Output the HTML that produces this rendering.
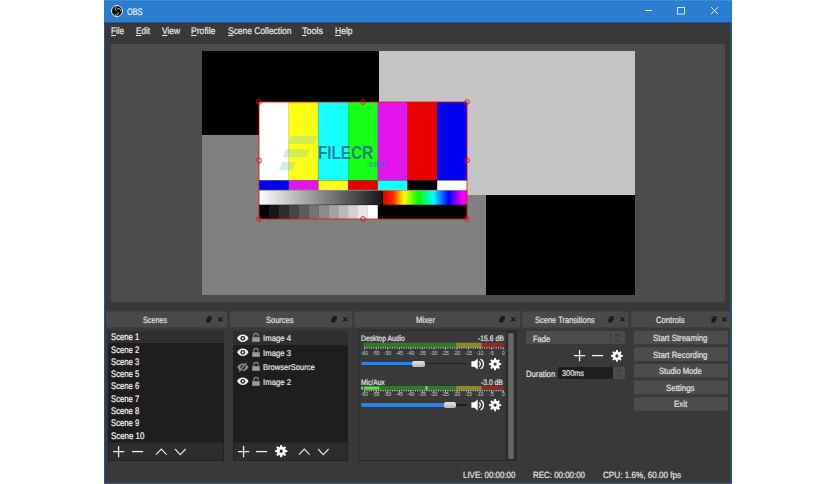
<!DOCTYPE html>
<html><head><meta charset="utf-8"><title>OBS</title>
<style>
html,body{margin:0;padding:0;background:#fff;}
body{width:836px;height:484px;position:relative;overflow:hidden;font-family:"Liberation Sans",sans-serif;}
.a{position:absolute;}
.t{text-rendering:geometricPrecision;-webkit-text-stroke:0.22px currentColor;position:absolute;white-space:pre;line-height:14px;height:14px;transform-origin:0 50%;font-family:"Liberation Sans",sans-serif;}
.t u{text-decoration:underline;text-underline-offset:1px;}
svg{position:absolute;overflow:visible;}

</style></head>
<body>
<div class="a" id="win" style="left:104px;top:0;width:628px;height:484px;background:#3a3939;"></div>
<div class="a" id="titlebar" style="left:104px;top:0;width:628px;height:24px;background:linear-gradient(#4a97df 0,#2b7dd2 1.4px,#2b7dd2 22.3px,#2e3033 22.7px,#333334 23.4px,rgba(58,57,57,0) 23.8px);"></div>
<div class="a" style="left:104px;top:22px;width:1.3px;height:462px;background:#27568a;"></div>
<div class="a" style="left:730.4px;top:22px;width:1.6px;height:462px;background:#24507f;"></div>
<div class="a" style="left:104px;top:482.5px;width:628px;height:1.5px;background:#2566a8;"></div>

<!-- OBS icon -->
<svg style="left:111.05px;top:4.7px" width="12" height="12" viewBox="0 0 24 24">
  <circle cx="12" cy="12" r="11" fill="#0b0b0b" stroke="#e8eef6" stroke-width="2"/>
  <path d="M11 3.5c-3 1.5-3.6 5.5-1 7.6 M20 11c-.6-3.4-4.3-5-7-3.2 M8.5 20c3.2 1.2 6.3-1.3 6-4.5" fill="none" stroke="#e8e8e8" stroke-width="1.7" stroke-linecap="round"/>
</svg>
<!-- window buttons -->
<div class="a" style="left:645px;top:10.4px;width:7px;height:1px;background:#f4f8ff;"></div>
<svg style="left:677px;top:7px" width="8" height="8" viewBox="0 0 8 8"><rect x="0.5" y="0.5" width="7" height="6.6" fill="none" stroke="#e8f2ff" stroke-width="0.9"/></svg>
<svg style="left:710.9px;top:7.2px" width="7.2" height="7.2" viewBox="0 0 7.2 7.2"><path d="M0.2 0.2L7 7M7 0.2L0.2 7" stroke="#fff" stroke-width="1" fill="none"/></svg>

<!-- preview -->
<div class="a" style="left:111px;top:44px;width:614px;height:258px;background:#4c4c4c;border-radius:2px;"></div>
<div class="a" style="left:202px;top:51px;width:177px;height:84px;background:#000;"></div>
<div class="a" style="left:202px;top:135px;width:284px;height:160px;background:#808080;"></div>
<div class="a" style="left:379px;top:51px;width:256px;height:144px;background:#c4c4c4;"></div>
<div class="a" style="left:486px;top:195px;width:149px;height:100px;background:#000;"></div>

<!-- color bars -->
<svg style="left:259px;top:102px" width="208" height="117" viewBox="0 0 208 117">
  <defs>
    <linearGradient id="gw" x1="0" x2="1" y1="0" y2="0"><stop offset="0" stop-color="#fff"/><stop offset="1" stop-color="#181818"/></linearGradient>
    <linearGradient id="rb" x1="0" x2="1" y1="0" y2="0">
      <stop offset="0" stop-color="#e00000"/><stop offset="0.12" stop-color="#ff2a00"/><stop offset="0.25" stop-color="#ffff00"/><stop offset="0.42" stop-color="#00ff00"/>
      <stop offset="0.6" stop-color="#00ffff"/><stop offset="0.78" stop-color="#0000ff"/><stop offset="0.95" stop-color="#ff00ff"/><stop offset="1" stop-color="#e000e0"/>
    </linearGradient>
  </defs>
  <rect x="0" y="0" width="208" height="117" fill="#000"/>
  <rect x="0" y="0" width="29.8" height="78.5" fill="#ffffff"/>
  <rect x="29.7" y="0" width="29.8" height="78.5" fill="#ffff16"/>
  <rect x="59.4" y="0" width="29.8" height="78.5" fill="#16ffff"/>
  <rect x="89.1" y="0" width="29.8" height="78.5" fill="#16ff16"/>
  <rect x="118.8" y="0" width="29.8" height="78.5" fill="#e414ee"/>
  <rect x="148.5" y="0" width="29.8" height="78.5" fill="#e80000"/>
  <rect x="178.2" y="0" width="29.8" height="78.5" fill="#0000f0"/>
  <rect x="0" y="78.5" width="29.8" height="9.5" fill="#0000f0"/>
  <rect x="29.7" y="78.5" width="29.8" height="9.5" fill="#e414ee"/>
  <rect x="59.4" y="78.5" width="29.8" height="9.5" fill="#ffff16"/>
  <rect x="89.1" y="78.5" width="29.8" height="9.5" fill="#e80000"/>
  <rect x="118.8" y="78.5" width="29.8" height="9.5" fill="#16ffff"/>
  <rect x="148.5" y="78.5" width="29.8" height="9.5" fill="#000"/>
  <rect x="178.2" y="78.5" width="29.8" height="9.5" fill="#fff"/>
  <rect x="0" y="87.9" width="208" height="0.8" fill="#cfcfcf"/>
  <rect x="0" y="88.7" width="123" height="14" fill="url(#gw)"/>
  <rect x="124" y="88.7" width="84" height="14" fill="url(#rb)"/>
  <g id="steps"></g>
  <rect x="0.00" y="103.1" width="9.99" height="13.9" fill="rgb(0,0,0)"/>
  <rect x="9.89" y="103.1" width="9.99" height="13.9" fill="rgb(23,23,23)"/>
  <rect x="19.78" y="103.1" width="9.99" height="13.9" fill="rgb(46,46,46)"/>
  <rect x="29.68" y="103.1" width="9.99" height="13.9" fill="rgb(70,70,70)"/>
  <rect x="39.57" y="103.1" width="9.99" height="13.9" fill="rgb(93,93,93)"/>
  <rect x="49.46" y="103.1" width="9.99" height="13.9" fill="rgb(116,116,116)"/>
  <rect x="59.35" y="103.1" width="9.99" height="13.9" fill="rgb(139,139,139)"/>
  <rect x="69.24" y="103.1" width="9.99" height="13.9" fill="rgb(162,162,162)"/>
  <rect x="79.13" y="103.1" width="9.99" height="13.9" fill="rgb(185,185,185)"/>
  <rect x="89.03" y="103.1" width="9.99" height="13.9" fill="rgb(209,209,209)"/>
  <rect x="98.92" y="103.1" width="9.99" height="13.9" fill="rgb(232,232,232)"/>
  <rect x="108.81" y="103.1" width="9.99" height="13.9" fill="rgb(255,255,255)"/>
  <!-- selection -->
  <rect x="0" y="0" width="208" height="117" fill="none" stroke="#e81010" stroke-width="0.85"/>
  <g fill="none" stroke="#d81818" stroke-width="0.9">
    <circle cx="0" cy="0" r="2.4"/><circle cx="104" cy="0" r="2.4"/><circle cx="208" cy="0" r="2.4"/>
    <circle cx="0" cy="58.5" r="2.4"/><circle cx="208" cy="58.5" r="2.4"/>
    <circle cx="0" cy="117" r="2.4"/><circle cx="104" cy="117" r="2.4"/><circle cx="208" cy="117" r="2.4"/>
  </g>
</svg>

<!-- watermark logo -->
<svg style="left:280px;top:134px" width="40" height="40" viewBox="0 0 40 40">
  <g fill="#86cdb0" fill-opacity="0.36">
    <polygon points="11,2 38,2 35,10 8,10"/>
    <polygon points="6,15 30,15 27,23 3,23"/>
    <polygon points="2,28 16,28 13,36 -1,36"/>
  </g>
</svg>
<span class="a" style="left:318px;top:143px;font-size:18.5px;line-height:20px;font-weight:bold;color:rgba(28,110,140,0.85);letter-spacing:-0.2px;transform:scaleX(0.84);transform-origin:0 50%;white-space:pre;">FILECR</span>
<span class="a" style="left:366.5px;top:159px;font-size:8.5px;line-height:10px;font-weight:bold;color:rgba(40,130,160,0.7);white-space:pre;">.com</span>

<!-- dock titles -->
<svg style="left:0;top:0" width="836" height="484" viewBox="0 0 836 484"><rect x="106" y="311.5" width="121.3" height="16" fill="#494949"/><rect x="229.8" y="311.5" width="122.6" height="16" fill="#494949"/><rect x="354.4" y="311.5" width="165.7" height="16" fill="#494949"/><rect x="522.1" y="311.5" width="106.4" height="16" fill="#494949"/><rect x="630.8" y="311.5" width="99.6" height="16" fill="#494949"/></svg>

<!-- scenes list -->
<div class="a" style="left:108.3px;top:330.7px;width:115.3px;height:111.5px;background:#1f1e1f;"></div>
<div class="a" style="left:108.3px;top:330.7px;width:115.3px;height:12.1px;background:#2f2f2f;"></div>
<div class="a" style="left:108.3px;top:442px;width:115.3px;height:19.4px;background:#2d2d2d;box-shadow:inset 0 0 0 0.8px #222;"></div>
<!-- sources list -->
<div class="a" style="left:233px;top:330.7px;width:115.3px;height:111.5px;background:#1f1e1f;"></div>
<div class="a" style="left:233px;top:330.7px;width:115.3px;height:14.5px;background:#2f2f2f;"></div>
<div class="a" style="left:233px;top:442px;width:115.3px;height:19.4px;background:#2d2d2d;box-shadow:inset 0 0 0 0.8px #222;"></div>

<!-- mixer panel -->
<div class="a" style="left:357.6px;top:330.2px;width:159px;height:130.6px;background:#3a3939;border:1px solid #2a2a2a;box-sizing:border-box;"></div>
<div class="a" style="left:506.4px;top:331px;width:10px;height:129px;background:#2b2b2b;"></div>
<div class="a" style="left:508.2px;top:333px;width:5.9px;height:125.6px;background:linear-gradient(to right,#5a5a5a,#6a6a6a 50%,#585858);border-radius:1.5px;"></div>

<!-- dock icons -->
<svg style="left:205.6px;top:315.7px" width="6.2" height="7" viewBox="0 0 6.2 7"><rect x="1.7" y="0.3" width="4" height="4" fill="#161616"/><rect x="0.3" y="2.3" width="4" height="4.2" fill="#161616" stroke="#3a3a3a" stroke-width="0.4"/></svg><svg style="left:218.2px;top:317.3px" width="5" height="5" viewBox="0 0 5 5"><path d="M0.4 0.4L4.4 4.4M4.4 0.4L0.4 4.4" stroke="#111" stroke-width="1.1" fill="none"/></svg>
<svg style="left:330.6px;top:315.7px" width="6.2" height="7" viewBox="0 0 6.2 7"><rect x="1.7" y="0.3" width="4" height="4" fill="#161616"/><rect x="0.3" y="2.3" width="4" height="4.2" fill="#161616" stroke="#3a3a3a" stroke-width="0.4"/></svg><svg style="left:342.7px;top:317.3px" width="5" height="5" viewBox="0 0 5 5"><path d="M0.4 0.4L4.4 4.4M4.4 0.4L0.4 4.4" stroke="#111" stroke-width="1.1" fill="none"/></svg>
<svg style="left:498.8px;top:315.7px" width="6.2" height="7" viewBox="0 0 6.2 7"><rect x="1.7" y="0.3" width="4" height="4" fill="#161616"/><rect x="0.3" y="2.3" width="4" height="4.2" fill="#161616" stroke="#3a3a3a" stroke-width="0.4"/></svg><svg style="left:511.0px;top:317.3px" width="5" height="5" viewBox="0 0 5 5"><path d="M0.4 0.4L4.4 4.4M4.4 0.4L0.4 4.4" stroke="#111" stroke-width="1.1" fill="none"/></svg>
<svg style="left:607.6px;top:315.7px" width="6.2" height="7" viewBox="0 0 6.2 7"><rect x="1.7" y="0.3" width="4" height="4" fill="#161616"/><rect x="0.3" y="2.3" width="4" height="4.2" fill="#161616" stroke="#3a3a3a" stroke-width="0.4"/></svg><svg style="left:619.6px;top:317.3px" width="5" height="5" viewBox="0 0 5 5"><path d="M0.4 0.4L4.4 4.4M4.4 0.4L0.4 4.4" stroke="#111" stroke-width="1.1" fill="none"/></svg>
<svg style="left:710.6px;top:315.7px" width="6.2" height="7" viewBox="0 0 6.2 7"><rect x="1.7" y="0.3" width="4" height="4" fill="#161616"/><rect x="0.3" y="2.3" width="4" height="4.2" fill="#161616" stroke="#3a3a3a" stroke-width="0.4"/></svg><svg style="left:722.4px;top:317.3px" width="5" height="5" viewBox="0 0 5 5"><path d="M0.4 0.4L4.4 4.4M4.4 0.4L0.4 4.4" stroke="#111" stroke-width="1.1" fill="none"/></svg>
<!-- scene toolbar -->
<svg style="left:113.1px;top:445.7px" width="11.2" height="11.2" viewBox="-5.6 -5.6 11.2 11.2"><path d="M-5.6 0H5.6M0 -5.6V5.6" stroke="#f0f0f0" stroke-width="1.3" fill="none"/></svg>
<svg style="left:132.0px;top:445.7px" width="11.2" height="11.2" viewBox="-5.6 -5.6 11.2 11.2"><path d="M-5.6 0H5.6" stroke="#f0f0f0" stroke-width="1.3" fill="none"/></svg>
<svg style="left:155.7px;top:448.8px" width="10.6" height="5.6" viewBox="-5.3 -2.8 10.6 5.6"><path d="M-5.3 2.8L0 -2.8L5.3 2.8" stroke="#e8e8e8" stroke-width="1.1" fill="none"/></svg>
<svg style="left:174.7px;top:449.0px" width="10.6" height="5.6" viewBox="-5.3 -2.8 10.6 5.6"><path d="M-5.3 -2.8L0 2.8L5.3 -2.8" stroke="#e8e8e8" stroke-width="1.1" fill="none"/></svg>
<!-- sources toolbar -->
<svg style="left:237.7px;top:445.7px" width="11.2" height="11.2" viewBox="-5.6 -5.6 11.2 11.2"><path d="M-5.6 0H5.6M0 -5.6V5.6" stroke="#f0f0f0" stroke-width="1.3" fill="none"/></svg>
<svg style="left:256.4px;top:445.7px" width="11.2" height="11.2" viewBox="-5.6 -5.6 11.2 11.2"><path d="M-5.6 0H5.6" stroke="#f0f0f0" stroke-width="1.3" fill="none"/></svg>
<svg style="left:275.1px;top:445.1px" width="12.4" height="12.4" viewBox="-6.2 -6.2 12.4 12.4"><path d="M4.31 -1.18L6.14 -0.83L6.14 0.83L4.31 1.18L3.88 2.21L4.93 3.76L3.76 4.93L2.21 3.88L1.18 4.31L0.83 6.14L-0.83 6.14L-1.18 4.31L-2.21 3.88L-3.76 4.93L-4.93 3.76L-3.88 2.21L-4.31 1.18L-6.14 0.83L-6.14 -0.83L-4.31 -1.18L-3.88 -2.21L-4.93 -3.76L-3.76 -4.93L-2.21 -3.88L-1.18 -4.31L-0.83 -6.14L0.83 -6.14L1.18 -4.31L2.21 -3.88L3.76 -4.93L4.93 -3.76L3.88 -2.21ZM1.61 0A1.61 1.61 0 1 0 -1.61 0A1.61 1.61 0 1 0 1.61 0Z" fill="#ffffff" fill-rule="evenodd"/></svg>
<svg style="left:299.2px;top:448.8px" width="10.6" height="5.6" viewBox="-5.3 -2.8 10.6 5.6"><path d="M-5.3 2.8L0 -2.8L5.3 2.8" stroke="#e8e8e8" stroke-width="1.1" fill="none"/></svg>
<svg style="left:317.7px;top:449.0px" width="10.6" height="5.6" viewBox="-5.3 -2.8 10.6 5.6"><path d="M-5.3 -2.8L0 2.8L5.3 -2.8" stroke="#e8e8e8" stroke-width="1.1" fill="none"/></svg>
<!-- source rows -->
<svg style="left:236.9px;top:333.8px" width="11.6" height="8.6" viewBox="-5.8 -4.3 11.6 8.6"><path d="M-5.7 0C-3.5 -4.9 3.5 -4.9 5.7 0C3.5 4.9 -3.5 4.9 -5.7 0Z" fill="#f2f2f2"/><circle cx="0" cy="0" r="2.4" fill="#1f1e1f"/><circle cx="0" cy="0" r="1.15" fill="#f2f2f2"/></svg>
<svg style="left:251.5px;top:333.2px" width="8" height="9" viewBox="-4 -4.6 8 9"><path d="M-2.2 -0.3V-2A2.2 2.2 0 0 1 2.2 -2V-1.2" fill="none" stroke="#8c8c8c" stroke-width="1.1"/><rect x="-3.8" y="-0.4" width="7.6" height="4.6" fill="#9a9a9a"/></svg>
<svg style="left:236.9px;top:348.4px" width="11.6" height="8.6" viewBox="-5.8 -4.3 11.6 8.6"><path d="M-5.7 0C-3.5 -4.9 3.5 -4.9 5.7 0C3.5 4.9 -3.5 4.9 -5.7 0Z" fill="#f2f2f2"/><circle cx="0" cy="0" r="2.4" fill="#1f1e1f"/><circle cx="0" cy="0" r="1.15" fill="#f2f2f2"/></svg>
<svg style="left:251.5px;top:347.8px" width="8" height="9" viewBox="-4 -4.6 8 9"><path d="M-2.2 -0.3V-2A2.2 2.2 0 0 1 2.2 -2V-1.2" fill="none" stroke="#8c8c8c" stroke-width="1.1"/><rect x="-3.8" y="-0.4" width="7.6" height="4.6" fill="#9a9a9a"/></svg>
<svg style="left:236.9px;top:362.9px" width="11.6" height="8.6" viewBox="-5.8 -4.3 11.6 8.6"><path d="M-5.7 0C-3.5 -4.9 3.5 -4.9 5.7 0C3.5 4.9 -3.5 4.9 -5.7 0Z" fill="#8a8a8a"/><circle cx="0" cy="0" r="2.4" fill="#1f1e1f"/><circle cx="0" cy="0" r="1.15" fill="#8a8a8a"/><path d="M-3.6 4.4L3.6 -4.4" stroke="#8a8a8a" stroke-width="1.2"/><path d="M-2.6 4.8L4.6 -4" stroke="#1f1e1f" stroke-width="0.8"/></svg>
<svg style="left:251.5px;top:362.3px" width="8" height="9" viewBox="-4 -4.6 8 9"><path d="M-2.2 -0.3V-2A2.2 2.2 0 0 1 2.2 -2V-1.2" fill="none" stroke="#8c8c8c" stroke-width="1.1"/><rect x="-3.8" y="-0.4" width="7.6" height="4.6" fill="#9a9a9a"/></svg>
<svg style="left:236.9px;top:377.4px" width="11.6" height="8.6" viewBox="-5.8 -4.3 11.6 8.6"><path d="M-5.7 0C-3.5 -4.9 3.5 -4.9 5.7 0C3.5 4.9 -3.5 4.9 -5.7 0Z" fill="#f2f2f2"/><circle cx="0" cy="0" r="2.4" fill="#1f1e1f"/><circle cx="0" cy="0" r="1.15" fill="#f2f2f2"/></svg>
<svg style="left:251.5px;top:376.8px" width="8" height="9" viewBox="-4 -4.6 8 9"><path d="M-2.2 -0.3V-2A2.2 2.2 0 0 1 2.2 -2V-1.2" fill="none" stroke="#8c8c8c" stroke-width="1.1"/><rect x="-3.8" y="-0.4" width="7.6" height="4.6" fill="#9a9a9a"/></svg>
<!-- mixer channels -->
<svg style="left:0;top:0" width="836" height="484" viewBox="0 0 836 484"><rect x="363.4" y="342.7" width="92.7" height="5.0" fill="#2e7a2a"/><rect x="456" y="342.7" width="25.9" height="5.0" fill="#8a8a2c"/><rect x="481.8" y="342.7" width="21.5" height="5.0" fill="#8a2c2c"/><path d="M364.70 347.30v2.3M367.01 347.30v1.3M369.32 347.30v1.3M371.62 347.30v1.3M373.93 347.30v1.3M376.24 347.30v2.3M378.55 347.30v1.3M380.86 347.30v1.3M383.17 347.30v1.3M385.47 347.30v1.3M387.78 347.30v2.3M390.09 347.30v1.3M392.40 347.30v1.3M394.71 347.30v1.3M397.02 347.30v1.3M399.32 347.30v2.3M401.63 347.30v1.3M403.94 347.30v1.3M406.25 347.30v1.3M408.56 347.30v1.3M410.87 347.30v2.3M413.18 347.30v1.3M415.48 347.30v1.3M417.79 347.30v1.3M420.10 347.30v1.3M422.41 347.30v2.3M424.72 347.30v1.3M427.02 347.30v1.3M429.33 347.30v1.3M431.64 347.30v1.3M433.95 347.30v2.3M436.26 347.30v1.3M438.57 347.30v1.3M440.88 347.30v1.3M443.18 347.30v1.3M445.49 347.30v2.3M447.80 347.30v1.3M450.11 347.30v1.3M452.42 347.30v1.3M454.73 347.30v1.3M457.03 347.30v2.3M459.34 347.30v1.3M461.65 347.30v1.3M463.96 347.30v1.3M466.27 347.30v1.3M468.57 347.30v2.3M470.88 347.30v1.3M473.19 347.30v1.3M475.50 347.30v1.3M477.81 347.30v1.3M480.12 347.30v2.3M482.42 347.30v1.3M484.73 347.30v1.3M487.04 347.30v1.3M489.35 347.30v1.3M491.66 347.30v2.3M493.97 347.30v1.3M496.27 347.30v1.3M498.58 347.30v1.3M500.89 347.30v1.3M503.20 347.30v2.3" stroke="#ececec" stroke-width="0.8" fill="none"/><text x="364.5" y="354.6" font-family="Liberation Sans, sans-serif" font-size="5" fill="#d0d0d0" text-anchor="middle">-60</text><text x="376.0" y="354.6" font-family="Liberation Sans, sans-serif" font-size="5" fill="#d0d0d0" text-anchor="middle">-55</text><text x="387.6" y="354.6" font-family="Liberation Sans, sans-serif" font-size="5" fill="#d0d0d0" text-anchor="middle">-50</text><text x="399.1" y="354.6" font-family="Liberation Sans, sans-serif" font-size="5" fill="#d0d0d0" text-anchor="middle">-45</text><text x="410.7" y="354.6" font-family="Liberation Sans, sans-serif" font-size="5" fill="#d0d0d0" text-anchor="middle">-40</text><text x="422.2" y="354.6" font-family="Liberation Sans, sans-serif" font-size="5" fill="#d0d0d0" text-anchor="middle">-35</text><text x="433.8" y="354.6" font-family="Liberation Sans, sans-serif" font-size="5" fill="#d0d0d0" text-anchor="middle">-30</text><text x="445.3" y="354.6" font-family="Liberation Sans, sans-serif" font-size="5" fill="#d0d0d0" text-anchor="middle">-25</text><text x="456.8" y="354.6" font-family="Liberation Sans, sans-serif" font-size="5" fill="#d0d0d0" text-anchor="middle">-20</text><text x="468.4" y="354.6" font-family="Liberation Sans, sans-serif" font-size="5" fill="#d0d0d0" text-anchor="middle">-15</text><text x="479.9" y="354.6" font-family="Liberation Sans, sans-serif" font-size="5" fill="#d0d0d0" text-anchor="middle">-10</text><text x="491.5" y="354.6" font-family="Liberation Sans, sans-serif" font-size="5" fill="#d0d0d0" text-anchor="middle">-5</text><text x="503.5" y="354.6" font-family="Liberation Sans, sans-serif" font-size="5" fill="#d0d0d0" text-anchor="middle">0</text></svg>
<svg style="left:0;top:0" width="836" height="484" viewBox="0 0 836 484"><rect x="363.4" y="386.0" width="92.7" height="4.4" fill="#2e7a2a"/><rect x="456" y="386.0" width="25.9" height="4.4" fill="#8a8a2c"/><rect x="481.8" y="386.0" width="21.5" height="4.4" fill="#8a2c2c"/><rect x="361.2" y="386.6" width="1.8" height="3.0" fill="#7fe870"/><rect x="364.1" y="386.6" width="15.2" height="3.0" fill="#58e04c"/><rect x="425.6" y="386.3" width="1.8" height="3.6" fill="#86e878"/><path d="M364.70 390.00v2.3M367.01 390.00v1.3M369.32 390.00v1.3M371.62 390.00v1.3M373.93 390.00v1.3M376.24 390.00v2.3M378.55 390.00v1.3M380.86 390.00v1.3M383.17 390.00v1.3M385.47 390.00v1.3M387.78 390.00v2.3M390.09 390.00v1.3M392.40 390.00v1.3M394.71 390.00v1.3M397.02 390.00v1.3M399.32 390.00v2.3M401.63 390.00v1.3M403.94 390.00v1.3M406.25 390.00v1.3M408.56 390.00v1.3M410.87 390.00v2.3M413.18 390.00v1.3M415.48 390.00v1.3M417.79 390.00v1.3M420.10 390.00v1.3M422.41 390.00v2.3M424.72 390.00v1.3M427.02 390.00v1.3M429.33 390.00v1.3M431.64 390.00v1.3M433.95 390.00v2.3M436.26 390.00v1.3M438.57 390.00v1.3M440.88 390.00v1.3M443.18 390.00v1.3M445.49 390.00v2.3M447.80 390.00v1.3M450.11 390.00v1.3M452.42 390.00v1.3M454.73 390.00v1.3M457.03 390.00v2.3M459.34 390.00v1.3M461.65 390.00v1.3M463.96 390.00v1.3M466.27 390.00v1.3M468.57 390.00v2.3M470.88 390.00v1.3M473.19 390.00v1.3M475.50 390.00v1.3M477.81 390.00v1.3M480.12 390.00v2.3M482.42 390.00v1.3M484.73 390.00v1.3M487.04 390.00v1.3M489.35 390.00v1.3M491.66 390.00v2.3M493.97 390.00v1.3M496.27 390.00v1.3M498.58 390.00v1.3M500.89 390.00v1.3M503.20 390.00v2.3" stroke="#ececec" stroke-width="0.8" fill="none"/><text x="364.5" y="396.0" font-family="Liberation Sans, sans-serif" font-size="5" fill="#d0d0d0" text-anchor="middle">-60</text><text x="376.0" y="396.0" font-family="Liberation Sans, sans-serif" font-size="5" fill="#d0d0d0" text-anchor="middle">-55</text><text x="387.6" y="396.0" font-family="Liberation Sans, sans-serif" font-size="5" fill="#d0d0d0" text-anchor="middle">-50</text><text x="399.1" y="396.0" font-family="Liberation Sans, sans-serif" font-size="5" fill="#d0d0d0" text-anchor="middle">-45</text><text x="410.7" y="396.0" font-family="Liberation Sans, sans-serif" font-size="5" fill="#d0d0d0" text-anchor="middle">-40</text><text x="422.2" y="396.0" font-family="Liberation Sans, sans-serif" font-size="5" fill="#d0d0d0" text-anchor="middle">-35</text><text x="433.8" y="396.0" font-family="Liberation Sans, sans-serif" font-size="5" fill="#d0d0d0" text-anchor="middle">-30</text><text x="445.3" y="396.0" font-family="Liberation Sans, sans-serif" font-size="5" fill="#d0d0d0" text-anchor="middle">-25</text><text x="456.8" y="396.0" font-family="Liberation Sans, sans-serif" font-size="5" fill="#d0d0d0" text-anchor="middle">-20</text><text x="468.4" y="396.0" font-family="Liberation Sans, sans-serif" font-size="5" fill="#d0d0d0" text-anchor="middle">-15</text><text x="479.9" y="396.0" font-family="Liberation Sans, sans-serif" font-size="5" fill="#d0d0d0" text-anchor="middle">-10</text><text x="491.5" y="396.0" font-family="Liberation Sans, sans-serif" font-size="5" fill="#d0d0d0" text-anchor="middle">-5</text><text x="503.5" y="396.0" font-family="Liberation Sans, sans-serif" font-size="5" fill="#d0d0d0" text-anchor="middle">0</text></svg>
<div class="a" style="left:361.2px;top:363.1px;width:106.2px;height:1.4px;background:#1e1e1e;"></div><div class="a" style="left:361.2px;top:362.0px;width:53.2px;height:3.4px;background:#2e84dc;border-radius:1.7px;"></div><div class="a" style="left:412.4px;top:360.5px;width:13.0px;height:6.4px;background:linear-gradient(#e0e0e0,#b8b8b8);border-radius:2px;"></div>
<svg style="left:470.9px;top:357.9px" width="12.8" height="12" viewBox="-6.4 -6 12.8 12"><path d="M-6 -2.7H-3L0.3 -5.4V5.4L-3 2.7H-6Z" fill="#fff"/><path d="M1.6 -2.5A3 3 0 0 1 1.6 2.5" fill="none" stroke="#fff" stroke-width="1.2"/><path d="M3.2 -4.9A5.6 5.6 0 0 1 3.2 4.9" fill="none" stroke="#fff" stroke-width="1.3"/></svg>
<svg style="left:489.1px;top:357.9px" width="12.2" height="12.2" viewBox="-6.1 -6.1 12.2 12.2"><path d="M4.24 -1.16L6.05 -0.81L6.05 0.81L4.24 1.16L3.82 2.18L4.85 3.70L3.70 4.85L2.18 3.82L1.16 4.24L0.81 6.05L-0.81 6.05L-1.16 4.24L-2.18 3.82L-3.70 4.85L-4.85 3.70L-3.82 2.18L-4.24 1.16L-6.05 0.81L-6.05 -0.81L-4.24 -1.16L-3.82 -2.18L-4.85 -3.70L-3.70 -4.85L-2.18 -3.82L-1.16 -4.24L-0.81 -6.05L0.81 -6.05L1.16 -4.24L2.18 -3.82L3.70 -4.85L4.85 -3.70L3.82 -2.18ZM1.59 0A1.59 1.59 0 1 0 -1.59 0A1.59 1.59 0 1 0 1.59 0Z" fill="#ffffff" fill-rule="evenodd"/></svg>
<div class="a" style="left:361.2px;top:404.3px;width:106.2px;height:1.4px;background:#1e1e1e;"></div><div class="a" style="left:361.2px;top:403.2px;width:84.6px;height:3.4px;background:#2e84dc;border-radius:1.7px;"></div><div class="a" style="left:443.8px;top:401.7px;width:12.7px;height:6.4px;background:linear-gradient(#e0e0e0,#b8b8b8);border-radius:2px;"></div>
<svg style="left:470.9px;top:399.1px" width="12.8" height="12" viewBox="-6.4 -6 12.8 12"><path d="M-6 -2.7H-3L0.3 -5.4V5.4L-3 2.7H-6Z" fill="#fff"/><path d="M1.6 -2.5A3 3 0 0 1 1.6 2.5" fill="none" stroke="#fff" stroke-width="1.2"/><path d="M3.2 -4.9A5.6 5.6 0 0 1 3.2 4.9" fill="none" stroke="#fff" stroke-width="1.3"/></svg>
<svg style="left:489.1px;top:399.1px" width="12.2" height="12.2" viewBox="-6.1 -6.1 12.2 12.2"><path d="M4.24 -1.16L6.05 -0.81L6.05 0.81L4.24 1.16L3.82 2.18L4.85 3.70L3.70 4.85L2.18 3.82L1.16 4.24L0.81 6.05L-0.81 6.05L-1.16 4.24L-2.18 3.82L-3.70 4.85L-4.85 3.70L-3.82 2.18L-4.24 1.16L-6.05 0.81L-6.05 -0.81L-4.24 -1.16L-3.82 -2.18L-4.85 -3.70L-3.70 -4.85L-2.18 -3.82L-1.16 -4.24L-0.81 -6.05L0.81 -6.05L1.16 -4.24L2.18 -3.82L3.70 -4.85L4.85 -3.70L3.82 -2.18ZM1.59 0A1.59 1.59 0 1 0 -1.59 0A1.59 1.59 0 1 0 1.59 0Z" fill="#ffffff" fill-rule="evenodd"/></svg>
<!-- transitions -->
<div class="a" style="left:526.2px;top:331px;width:98.6px;height:13.4px;background:#4c4c4c;border-radius:1.5px;"></div>
<div class="a" style="left:609.6px;top:331px;width:1px;height:13.4px;background:#3e3e3e;"></div>
<svg style="left:614.4px;top:332.7px" width="6" height="10" viewBox="-3 -5 6 10"><path d="M-2.2 -1.4L0 -3.6L2.2 -1.4M-2.2 1.4L0 3.6L2.2 1.4" stroke="#2a2a2a" stroke-width="0.9" fill="none"/></svg>
<svg style="left:573.6px;top:349.8px" width="11.2" height="11.2" viewBox="-5.6 -5.6 11.2 11.2"><path d="M-5.6 0H5.6M0 -5.6V5.6" stroke="#f0f0f0" stroke-width="1.3" fill="none"/></svg>
<svg style="left:592.2px;top:349.8px" width="11.2" height="11.2" viewBox="-5.6 -5.6 11.2 11.2"><path d="M-5.6 0H5.6" stroke="#f0f0f0" stroke-width="1.3" fill="none"/></svg>
<svg style="left:610.8px;top:350.0px" width="11.8" height="11.8" viewBox="-5.9 -5.9 11.8 11.8"><path d="M4.10 -1.12L5.85 -0.79L5.85 0.79L4.10 1.12L3.69 2.10L4.69 3.58L3.58 4.69L2.10 3.69L1.12 4.10L0.79 5.85L-0.79 5.85L-1.12 4.10L-2.10 3.69L-3.58 4.69L-4.69 3.58L-3.69 2.10L-4.10 1.12L-5.85 0.79L-5.85 -0.79L-4.10 -1.12L-3.69 -2.10L-4.69 -3.58L-3.58 -4.69L-2.10 -3.69L-1.12 -4.10L-0.79 -5.85L0.79 -5.85L1.12 -4.10L2.10 -3.69L3.58 -4.69L4.69 -3.58L3.69 -2.10ZM1.53 0A1.53 1.53 0 1 0 -1.53 0A1.53 1.53 0 1 0 1.53 0Z" fill="#ffffff" fill-rule="evenodd"/></svg>
<div class="a" style="left:558.3px;top:367.3px;width:66.5px;height:11.4px;background:#1f1e1f;border-radius:1.5px;"></div>
<div class="a" style="left:612.7px;top:367.3px;width:12.1px;height:11.4px;background:#4c4c4c;border-radius:0 1.5px 1.5px 0;"></div>
<svg style="left:615.7px;top:368.0px" width="6" height="10" viewBox="-3 -5 6 10"><path d="M-2.2 -1.4L0 -3.6L2.2 -1.4M-2.2 1.4L0 3.6L2.2 1.4" stroke="#2a2a2a" stroke-width="0.9" fill="none"/></svg>
<!-- control buttons -->
<svg style="left:0;top:0" width="836" height="484" viewBox="0 0 836 484"><rect x="633.8" y="330.7" width="94.3" height="13.6" rx="1.5" fill="#4c4c4c"/><rect x="633.8" y="347.3" width="94.3" height="13.6" rx="1.5" fill="#4c4c4c"/><rect x="633.8" y="363.9" width="94.3" height="13.6" rx="1.5" fill="#4c4c4c"/><rect x="633.8" y="380.6" width="94.3" height="13.6" rx="1.5" fill="#4c4c4c"/><rect x="633.8" y="397.2" width="94.3" height="13.6" rx="1.5" fill="#4c4c4c"/></svg>

<span class="t" style="left:126.7px;top:6px;font-size:9.6px;color:#e4f0ff;transform:scaleX(0.765)">OBS</span>
<span class="t" style="left:110.8px;top:25px;font-size:9.6px;color:#e6e6e6;transform:scaleX(0.847)"><u>F</u>ile</span>
<span class="t" style="left:135.7px;top:25px;font-size:9.6px;color:#e6e6e6;transform:scaleX(0.852)"><u>E</u>dit</span>
<span class="t" style="left:161.6px;top:25px;font-size:9.6px;color:#e6e6e6;transform:scaleX(0.878)"><u>V</u>iew</span>
<span class="t" style="left:191.2px;top:25px;font-size:9.6px;color:#e6e6e6;transform:scaleX(0.897)"><u>P</u>rofile</span>
<span class="t" style="left:227.6px;top:25px;font-size:9.6px;color:#e6e6e6;transform:scaleX(0.881)"><u>S</u>cene Collection</span>
<span class="t" style="left:302.0px;top:25px;font-size:9.6px;color:#e6e6e6;transform:scaleX(0.937)"><u>T</u>ools</span>
<span class="t" style="left:334.7px;top:25px;font-size:9.6px;color:#e6e6e6;transform:scaleX(0.892)"><u>H</u>elp</span>
<span class="t" style="left:142.8px;top:313px;font-size:9px;color:#e1e0e1;transform:scaleX(0.802)">Scenes</span>
<span class="t" style="left:265.5px;top:313px;font-size:9px;color:#e1e0e1;transform:scaleX(0.830)">Sources</span>
<span class="t" style="left:416.1px;top:313px;font-size:9px;color:#e1e0e1;transform:scaleX(0.864)">Mixer</span>
<span class="t" style="left:534.5px;top:313px;font-size:9px;color:#e1e0e1;transform:scaleX(0.833)">Scene Transitions</span>
<span class="t" style="left:655.6px;top:313px;font-size:9px;color:#e1e0e1;transform:scaleX(0.853)">Controls</span>
<span class="t" style="left:111.2px;top:331px;font-size:9.5px;color:#f0f0f0;transform:scaleX(0.809)">Scene 1</span>
<span class="t" style="left:111.2px;top:344px;font-size:9.5px;color:#f0f0f0;transform:scaleX(0.809)">Scene 2</span>
<span class="t" style="left:111.2px;top:356px;font-size:9.5px;color:#f0f0f0;transform:scaleX(0.809)">Scene 3</span>
<span class="t" style="left:111.2px;top:368px;font-size:9.5px;color:#f0f0f0;transform:scaleX(0.809)">Scene 5</span>
<span class="t" style="left:111.2px;top:380px;font-size:9.5px;color:#f0f0f0;transform:scaleX(0.809)">Scene 6</span>
<span class="t" style="left:111.2px;top:393px;font-size:9.5px;color:#f0f0f0;transform:scaleX(0.809)">Scene 7</span>
<span class="t" style="left:111.2px;top:405px;font-size:9.5px;color:#f0f0f0;transform:scaleX(0.809)">Scene 8</span>
<span class="t" style="left:111.2px;top:417px;font-size:9.5px;color:#f0f0f0;transform:scaleX(0.809)">Scene 9</span>
<span class="t" style="left:111.2px;top:430px;font-size:9.5px;color:#f0f0f0;transform:scaleX(0.832)">Scene 10</span>
<span class="t" style="left:263.1px;top:331px;font-size:8.5px;color:#e1e0e1;transform:scaleX(0.915)">Image 4</span>
<span class="t" style="left:263.1px;top:346px;font-size:8.5px;color:#e1e0e1;transform:scaleX(0.915)">Image 3</span>
<span class="t" style="left:263.1px;top:360px;font-size:8.5px;color:#e1e0e1;transform:scaleX(0.890)">BrowserSource</span>
<span class="t" style="left:263.1px;top:375px;font-size:8.5px;color:#e1e0e1;transform:scaleX(0.915)">Image 2</span>
<span class="t" style="left:361.2px;top:332px;font-size:8px;color:#e1e0e1;transform:scaleX(0.849)">Desktop Audio</span>
<span class="t" style="left:477.5px;top:332px;font-size:8px;color:#e1e0e1;transform:scaleX(0.853)">-15.6 dB</span>
<span class="t" style="left:361.2px;top:376px;font-size:8px;color:#e1e0e1;transform:scaleX(0.833)">Mic/Aux</span>
<span class="t" style="left:481.4px;top:376px;font-size:8px;color:#e1e0e1;transform:scaleX(0.849)">-3.0 dB</span>
<span class="t" style="left:532.7px;top:332px;font-size:9px;color:#e1e0e1;transform:scaleX(0.834)">Fade</span>
<span class="t" style="left:525.8px;top:367px;font-size:9px;color:#e1e0e1;transform:scaleX(0.858)">Duration</span>
<span class="t" style="left:561.5px;top:366px;font-size:8.5px;color:#e1e0e1;transform:scaleX(0.862)">300ms</span>
<span class="t" style="left:652.8px;top:331px;font-size:9px;color:#e1e0e1;transform:scaleX(0.870)">Start Streaming</span>
<span class="t" style="left:652.8px;top:348px;font-size:9px;color:#e1e0e1;transform:scaleX(0.870)">Start Recording</span>
<span class="t" style="left:658.7px;top:364px;font-size:9px;color:#e1e0e1;transform:scaleX(0.847)">Studio Mode</span>
<span class="t" style="left:665.9px;top:381px;font-size:9px;color:#e1e0e1;transform:scaleX(0.876)">Settings</span>
<span class="t" style="left:674.2px;top:397px;font-size:9px;color:#e1e0e1;transform:scaleX(0.872)">Exit</span>
<span class="t" style="left:462.6px;top:468px;font-size:9px;color:#e1e0e1;transform:scaleX(0.880)">LIVE: 00:00:00</span>
<span class="t" style="left:533.3px;top:468px;font-size:9px;color:#e1e0e1;transform:scaleX(0.881)">REC: 00:00:00</span>
<span class="t" style="left:603.4px;top:468px;font-size:9px;color:#e1e0e1;transform:scaleX(0.902)">CPU: 1.6%, 60.00 fps</span>
</body></html>
